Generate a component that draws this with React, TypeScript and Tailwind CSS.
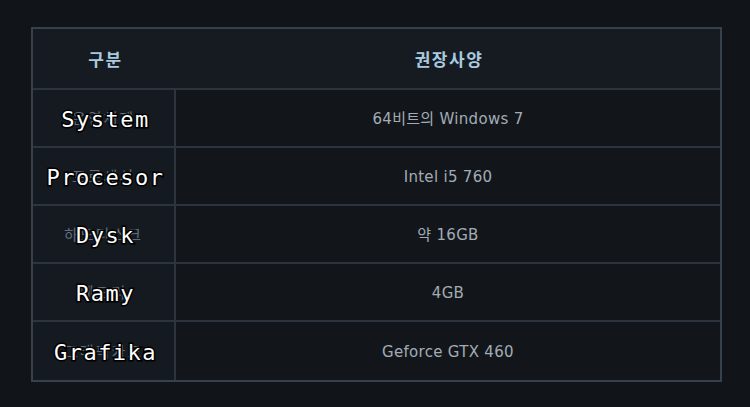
import * as React from "react";

const ROWS = [
  { ko: "운영체제", pl: "System", spec: "64비트의 Windows 7" },
  { ko: "프로세서", pl: "Procesor", spec: "Intel i5 760" },
  { ko: "하드디스크", pl: "Dysk", spec: "약 16GB" },
  { ko: "메모리", pl: "Ramy", spec: "4GB" },
  { ko: "그래픽카드", pl: "Grafika", spec: "Geforce GTX 460" },
];

const ko = "font-['Noto_Sans_CJK_KR','Noto_Sans',sans-serif]";
const spec = "font-['DejaVu_Sans','Noto_Sans_CJK_KR',sans-serif]";

export default function App() {
  return (
    <div className="w-[750px] h-[407px] bg-[#111418] pt-[27px] pl-[31px]">
      <div className="w-[691px] border-2 border-[#36414b] bg-[#12161b]">
        {/* Header */}
        <div className="grid grid-cols-[143px_1fr] h-[61px] bg-[#161b21] border-b-2 border-[#2c353e]">
          <div className={`flex items-center justify-center pt-[1px] pl-[2px] text-[17px] font-bold tracking-[1.5px] text-[#a9cbe0] ${ko}`}>구분</div>
          <div className={`flex items-center justify-center pt-[1px] pl-[2px] text-[17px] font-bold tracking-[1.5px] text-[#a9cbe0] ${ko}`}>권장사양</div>
        </div>

        {ROWS.map((row, i) => (
          <div
            key={row.pl}
            className={`grid grid-cols-[143px_1fr] h-[58px] ${i < ROWS.length - 1 ? "border-b-2 border-[#2c353e]" : ""}`}
          >
            <div className="relative flex items-center justify-center bg-[#151a20] border-r-2 border-[#2c353e]">
              <span className={`text-[15px] tracking-[2px] text-[#5f6d7a] ${ko}`}>{row.ko}</span>
              <span className="absolute inset-0 flex items-center justify-center pt-[2px] pl-[4px] font-['DejaVu_Sans_Mono',monospace] text-[22px] tracking-[1.5px] text-white [-webkit-text-stroke:3px_#000] [paint-order:stroke_fill]">
                {row.pl}
              </span>
            </div>
            <div className={`flex items-center justify-center pt-[2px] text-[15px] tracking-[0.3px] text-[#a3acb4] ${spec}`}>{row.spec}</div>
          </div>
        ))}
      </div>
    </div>
  );
}
